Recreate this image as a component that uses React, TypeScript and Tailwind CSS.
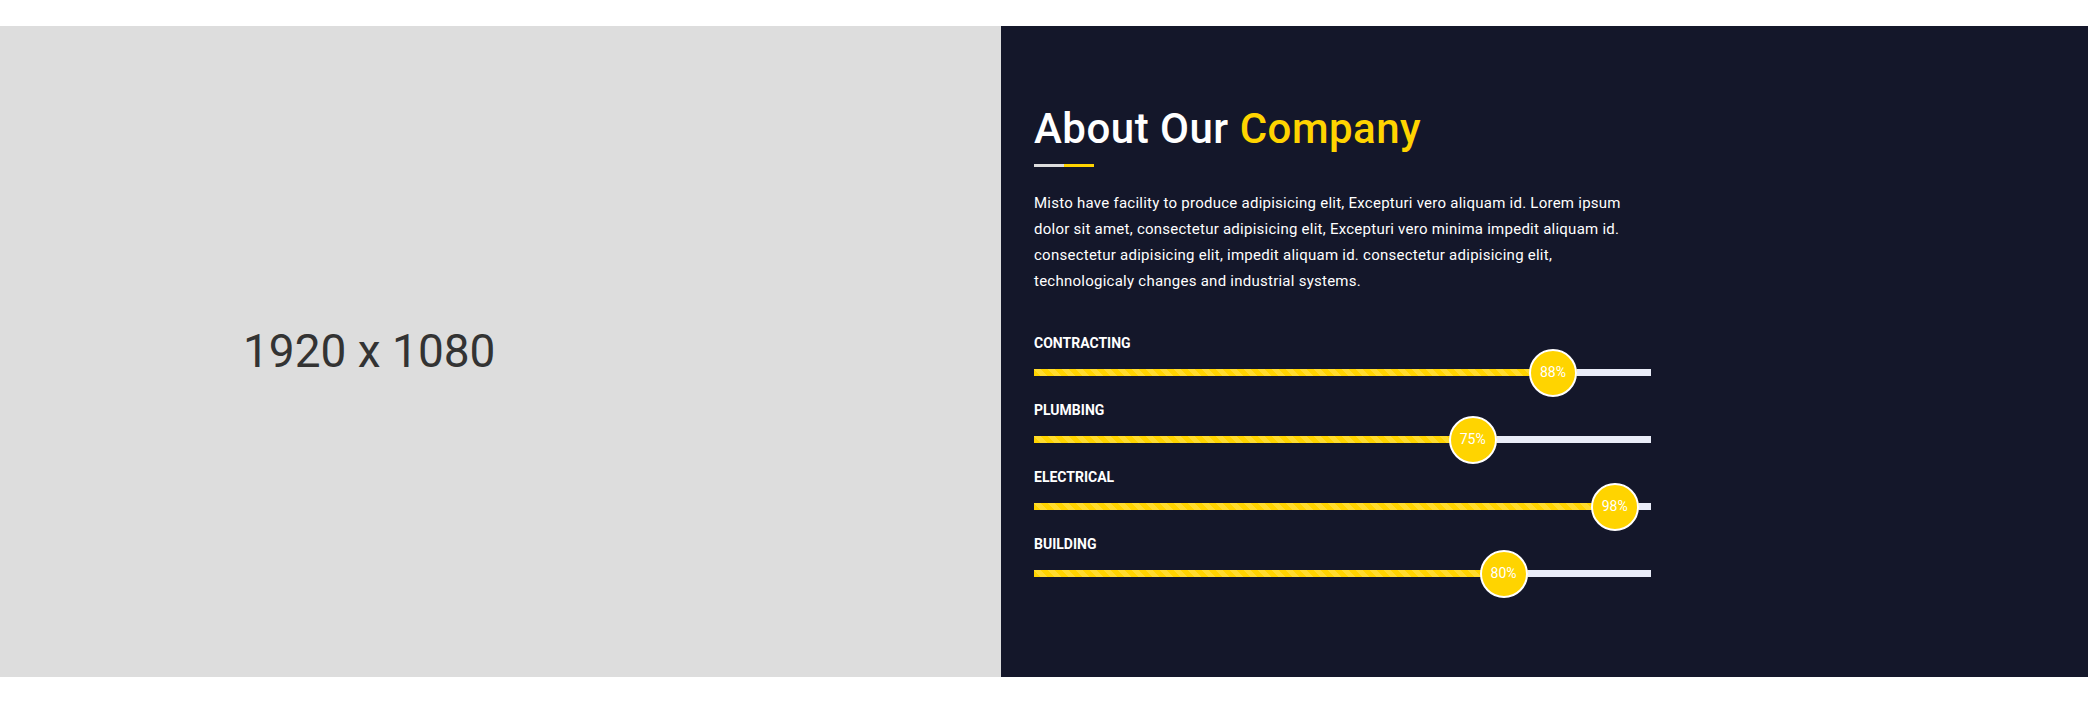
import React from "react";

const skills = [
  { name: "Contracting", value: 88 },
  { name: "Plumbing", value: 75 },
  { name: "Electrical", value: 98 },
  { name: "Building", value: 80 },
];

const SkillBar: React.FC<{ name: string; value: number }> = ({ name, value }) => (
  <div className="mb-[24px]">
    <h4 className="text-[14px] leading-[20px] font-bold uppercase text-white">
      {name}
    </h4>
    <div className="relative mt-[16px] h-[7px] w-full bg-[#eaedf8]">
      <div
        className="relative h-full bg-[#ffd400] bg-[linear-gradient(45deg,rgba(255,255,255,.18)_25%,transparent_25%,transparent_50%,rgba(255,255,255,.18)_50%,rgba(255,255,255,.18)_75%,transparent_75%,transparent)] bg-[length:14px_14px]"
        style={{ width: `${value}%` }}
      >
        <span className="absolute right-0 top-1/2 flex h-[48px] w-[48px] -translate-y-1/2 items-center justify-center rounded-full border-2 border-white bg-[#ffd400] text-[14px] text-white">
          {value}%
        </span>
      </div>
    </div>
  </div>
);

export default function App() {
  return (
    <div className="bg-white pt-[26px] pb-[29px] font-['Roboto',sans-serif]">
      <section className="flex h-[651px]">
        <div className="flex w-[1001px] items-center bg-[#dddddd] pl-[243px]">
          <span className="text-[46px] text-[#333333]">1920 x 1080</span>
        </div>

        <div className="flex-1 bg-[#14172a] pl-[33px] pt-[78px]">
          <div className="w-[617px]">
            <h2 className="text-[42px] leading-[50px] font-medium tracking-[0.5px] text-white">
              About Our <span className="text-[#ffd400]">Company</span>
            </h2>
            <div className="mt-[10px] flex h-[3px] w-[60px]">
              <span className="w-1/2 bg-[#dddddd]" />
              <span className="w-1/2 bg-[#ffd400]" />
            </div>
            <p className="mt-[23px] max-w-[606px] text-[15px] leading-[26px] tracking-[0.25px] text-white">
              Misto have facility to produce adipisicing elit, Excepturi vero aliquam id. Lorem ipsum
              dolor sit amet, consectetur adipisicing elit, Excepturi vero minima impedit aliquam id.
              consectetur adipisicing elit, impedit aliquam id. consectetur adipisicing elit,
              technologicaly changes and industrial systems.
            </p>

            <div className="mt-[39px]">
              {skills.map((s) => (
                <SkillBar key={s.name} name={s.name} value={s.value} />
              ))}
            </div>
          </div>
        </div>
      </section>
    </div>
  );
}
